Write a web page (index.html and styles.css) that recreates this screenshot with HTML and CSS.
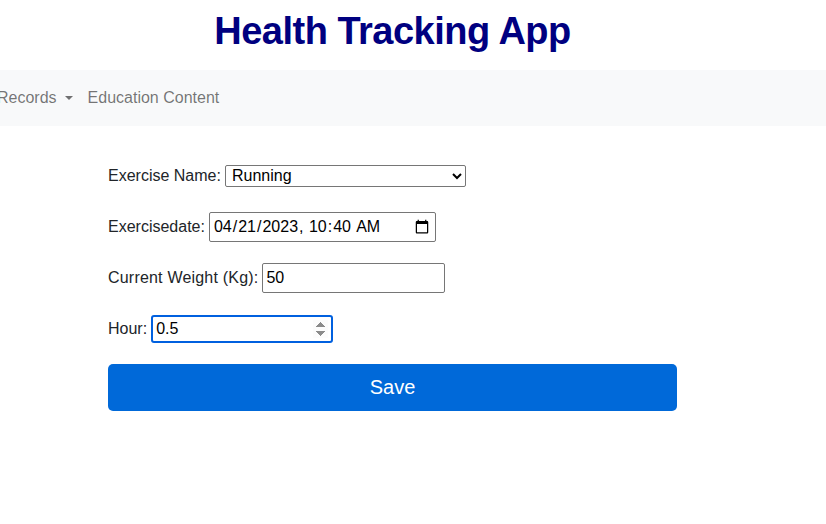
FILE: index.html
```html
<!DOCTYPE html>
<html lang="en">
<head>
  <meta charset="UTF-8">
  <meta name="viewport" content="width=device-width, initial-scale=1.0">
  <title>Health Tracking App</title>
  <link rel="stylesheet" href="styles.css">
</head>
<body>
  <div class="page">
    <h1 class="title">Health Tracking App</h1>

    <nav class="navbar">
      <div class="nav-items">
        <a class="nav-link dropdown" href="#">Records <span class="caret"></span></a>
        <a class="nav-link" href="#">Education Content</a>
      </div>
    </nav>

    <form class="exercise-form">
      <div class="form-row">
        <label for="exercise">Exercise Name:</label>
        <select id="exercise" class="field field-select">
          <option>Running</option>
          <option>Walking</option>
          <option>Swimming</option>
        </select>
      </div>
      <div class="form-row">
        <label for="exdate">Exercisedate:</label>
        <input id="exdate" class="field field-date" type="datetime-local" value="2023-04-21T10:40">
      </div>
      <div class="form-row">
        <label for="weight" class="label-wide">Current Weight (Kg):</label>
        <input id="weight" class="field field-text" type="text" value="50">
      </div>
      <div class="form-row">
        <label for="hour">Hour:</label>
        <input id="hour" class="field field-number" type="number" step="0.5" value="0.5" autofocus>
      </div>
      <button type="button" class="btn-save">Save</button>
    </form>
  </div>
</body>
</html>
```

FILE: styles.css
```css
body {
  margin: 0;
  font-family: "Liberation Sans", Arial, sans-serif;
  color: #212529;
  background: #fff;
}

.page {
  width: 785px;
}

.title {
  margin: 0;
  padding-top: 8px;
  height: 62px;
  font-size: 38px;
  line-height: 46px;
  letter-spacing: -0.5px;
  font-weight: bold;
  text-align: center;
  color: #000080;
}

/* nav bar */
.navbar {
  width: 826px;
  height: 56px;
  background-color: #f8f9fa;
  overflow: hidden;
  display: flex;
  align-items: center;
}

.nav-items {
  display: flex;
  align-items: center;
  gap: 15px;
  margin-left: -3px;
}

.nav-link {
  font-size: 16px;
  color: rgba(0, 0, 0, 0.55);
  text-decoration: none;
  display: flex;
  align-items: center;
}

.caret {
  display: inline-block;
  margin-left: 8px;
  border-top: 4px solid rgba(0, 0, 0, 0.55);
  border-left: 4px solid transparent;
  border-right: 4px solid transparent;
}

/* form */
.exercise-form {
  width: 569px;
  margin: 0 auto;
  padding-top: 24px;
}

.form-row {
  display: flex;
  align-items: center;
  gap: 4px;
  height: 51px;
  font-size: 16px;
}

.label-wide {
  letter-spacing: 0.2px;
}

.field {
  font-family: "Liberation Sans", Arial, sans-serif;
  font-size: 16px;
  color: #000;
  border: 1px solid #767676;
  border-radius: 2px;
  background: #fff;
  box-sizing: border-box;
}

.field-select {
  width: 241px;
  height: 22px;
  padding: 0 2px;
}

.field-date {
  width: 227px;
  height: 30px;
  padding: 1px 3px;
}

.field-text {
  width: 183px;
  height: 30px;
  padding: 1px 3px;
}

.field-number {
  width: 182px;
  height: 28px;
  padding: 1px 3px;
  border: 2px solid #0060df;
  border-radius: 3px;
  outline: none;
}

.btn-save {
  display: block;
  width: 569px;
  height: 47px;
  margin-top: 10px;
  border: none;
  border-radius: 5px;
  background-color: #0069d9;
  color: #fff;
  font-family: "Liberation Sans", Arial, sans-serif;
  font-size: 20px;
}
```
